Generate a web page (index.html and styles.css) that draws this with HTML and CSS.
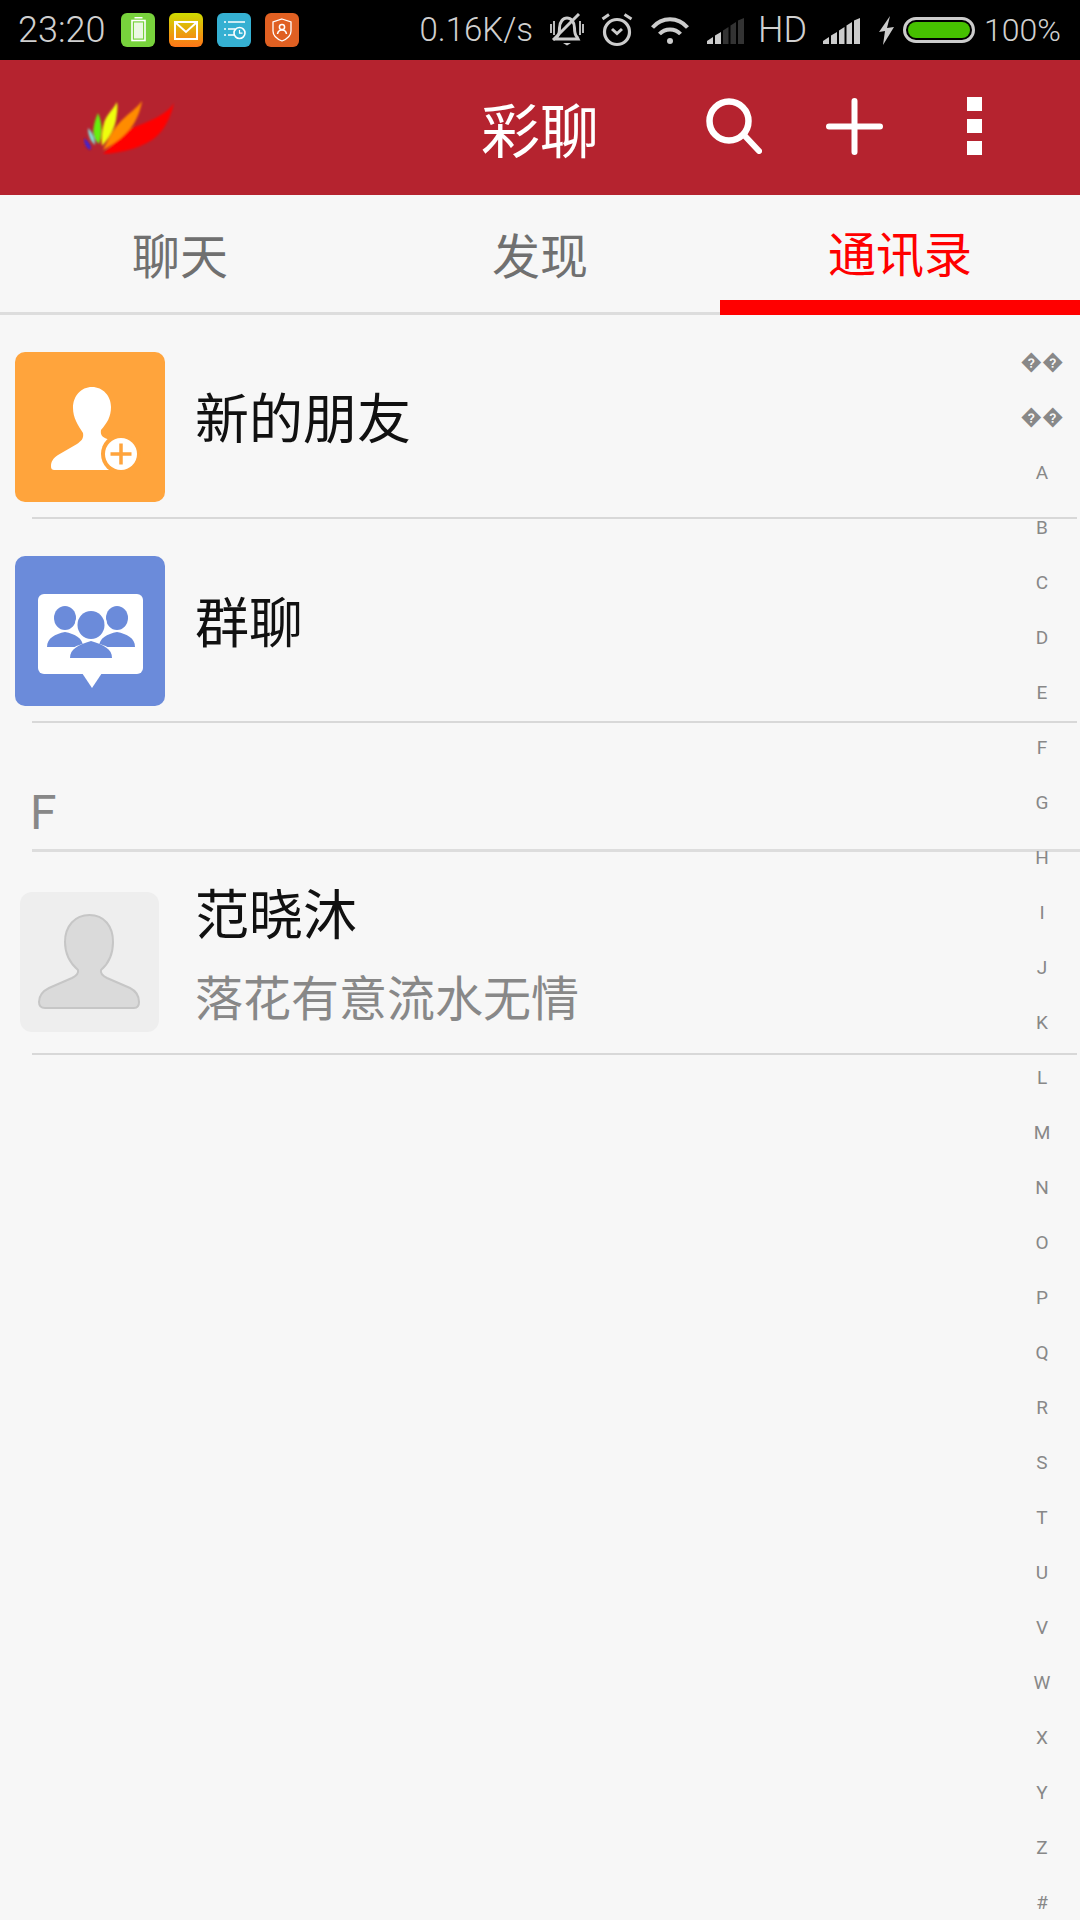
FILE: index.html
```html
<!DOCTYPE html>
<html lang="zh-CN">
  <head>
    <meta charset="UTF-8" />
    <meta name="viewport" content="width=device-width, initial-scale=1.0" />
    <title>彩聊</title>
    <link rel="stylesheet" href="styles.css">
  </head>

  <body>
    <div class="phone">
      <div class="statusbar">
        <div class="status-left">
          <span class="status-text time">23:20</span>
          <svg class="noti" viewBox="0 0 34 34"><rect width="34" height="34" rx="6" fill="#78d23c"/><rect x="11" y="7.5" width="13" height="20" fill="none" stroke="#fff" stroke-width="1.6"/><rect x="13.5" y="4" width="8" height="1.5" fill="#fff"/><rect x="13" y="9.5" width="9" height="16" fill="#fff" opacity=".85"/></svg>
          <svg class="noti" viewBox="0 0 34 34"><defs><linearGradient id="mailbg" x1="0" y1="0" x2="0" y2="1"><stop offset="0" stop-color="#cfdc00"/><stop offset="1" stop-color="#ff7518"/></linearGradient></defs><rect width="34" height="34" rx="6" fill="url(#mailbg)"/><rect x="6" y="9" width="22" height="17" fill="none" stroke="#fff" stroke-width="2"/><path d="M6.5 9.5 17 19 27.5 9.5" fill="none" stroke="#fff" stroke-width="2"/></svg>
          <svg class="noti" viewBox="0 0 34 34"><rect width="34" height="34" rx="6" fill="#35b0d2"/><path d="M7 9h2M11 9h17M7 16h2M11 16h7M7 22h2M11 22h6" stroke="#fff" stroke-width="1.5"/><circle cx="22.5" cy="20" r="5.5" fill="none" stroke="#fff" stroke-width="1.6"/><path d="M22.5 17v3.2h3" fill="none" stroke="#fff" stroke-width="1.2"/></svg>
          <svg class="noti" viewBox="0 0 34 34"><rect width="34" height="34" rx="6" fill="#e06022"/><path d="M17 6 26 9v9c0 5-4 8-9 10-5-2-9-5-9-10V9z" fill="none" stroke="#fff" stroke-width="1.3"/><circle cx="17" cy="14" r="2.6" fill="none" stroke="#fff" stroke-width="1.5"/><path d="M12.5 21c.5-3 2.5-4 4.500-4s4 1 4.500 4" fill="none" stroke="#fff" stroke-width="1.5"/></svg>
        </div>
        <div class="status-right">
          <span class="status-text speed">0.16K/s</span>
          <svg class="ic-bell" viewBox="0 0 34 34"><path d="M7 24c2-2 2.500-4 2.500-9 0-6 3.500-10 7.500-10s7.500 4 7.500 10c0 5 .5 7 2.500 9l1 2H6z" fill="none" stroke="#ccc" stroke-width="3"/><path d="M29 1 3 27" stroke="#ccc" stroke-width="3"/><path d="M13 30h8l-4 2.500z" fill="#ccc"/><path d="M1 11v9M4 8v14M30 8v14M33 11v9" stroke="#ccc" stroke-width="1.800"/></svg>
          <svg class="ic-alarm" viewBox="0 0 32 34"><circle cx="16" cy="19" r="12.500" fill="none" stroke="#ccc" stroke-width="3.200"/><path d="M11 16l5 4.500 5-4.500" fill="none" stroke="#ccc" stroke-width="3"/><path d="M1.500 6 8 1.500M23.500 1.500 30.500 6" stroke="#ccc" stroke-width="3"/></svg>
          <svg class="ic-wifi" viewBox="0 0 38 28"><path d="M1.500 11.500C11 .5 27 .5 36.500 11.500M8.500 18C14 12 24 12 29.500 18" fill="none" stroke="#ccc" stroke-width="4"/><circle cx="19" cy="25" r="3" fill="#ccc"/></svg>
          <svg class="ic-signal" viewBox="0 0 37 26"><path d="M0 26v-3l6-4v7z" fill="#ccc"/><path d="M8 26V17.500L14 14v12z" fill="#ccc"/><path d="M16 26V12.500L21.500 9v17z" fill="#333"/><path d="M23.500 26V7.500L29 4v22z" fill="#333"/><path d="M31 26V2.500L37 0v26z" fill="#333"/></svg>
          <span class="status-text hd">HD</span>
          <svg class="ic-signal ic-signal-full" viewBox="0 0 37 26"><path d="M0 26v-3l6-4v7z" fill="#ccc"/><path d="M8 26V17.500L14 14v12z" fill="#ccc"/><path d="M16 26V12.500L21.500 9v17z" fill="#ccc"/><path d="M23.500 26V7.500L29 4v22z" fill="#ccc"/><path d="M31 26V2.500L37 0v26z" fill="#ccc"/></svg>
          <svg class="ic-bolt" viewBox="0 0 16 31"><path d="M11 1 0 17l6-1-2 14L15 12l-7 1z" fill="#ccc"/></svg>
          <div class="battery"><div class="battery-fill"></div></div>
          <span class="status-text percent">100%</span>
        </div>
      </div>

      <div class="topbar">
        <div class="logo-cell">
          <svg class="logo" viewBox="0 0 92 55">
            <defs><filter id="soft"><feGaussianBlur stdDeviation="0.8"/></filter></defs>
            <g filter="url(#soft)">
              <path d="M20 54C40 53 62 47 74 36 82 29 88 16 91 3 85 13 70 20 54 26 44 30 36 36 30 44z" fill="#ff0000"/>
              <path d="M20 50C32 44 44 34 50 25 55 17 58 8 59 1 54 8 46 13 38 21 30 29 25 40 20 50z" fill="#ff8c00"/>
              <path d="M19 46C26 38 31 30 33 20 34 13 35 8 34 2 30 10 23 15 21 23 19 30 18 38 19 46z" fill="#eeff10"/>
              <path d="M16 44C19 36 20 24 15 13 12 20 9 30 11 36 12 40 14 42 16 44z" fill="#66ee10"/>
              <path d="M12 45C12 38 9 32 5 28 5 34 7 41 12 45z" fill="#80e0d8"/>
              <path d="M7 50C10 47 5 41 1 38 1 43 3 48 7 50z" fill="#4422cc"/>
            </g>
          </svg>
        </div>
        <div class="title">彩聊</div>
        <div class="actions">
          <svg class="ic-search" viewBox="0 0 56 56"><circle cx="23" cy="23" r="19.500" fill="none" stroke="#fff" stroke-width="6.500"/><path d="M38 37 53 53" stroke="#fff" stroke-width="6" stroke-linecap="round"/></svg>
          <svg class="ic-plus" viewBox="0 0 57 57"><path d="M3 28.500h51M28.500 3v51" stroke="#fff" stroke-width="6" stroke-linecap="round"/></svg>
          <div class="dots"><span></span><span></span><span></span></div>
        </div>
      </div>

      <div class="tabs">
        <div class="tab">聊天</div>
        <div class="tab">发现</div>
        <div class="tab active">通讯录</div>
      </div>

      <div class="contact-row">
        <svg class="icon" viewBox="0 0 150 150">
          <rect width="150" height="150" rx="10" fill="#ffa43c"/>
          <path d="M77 35C66 35 58 44 58 56 58 66 63 73 68 81 69 87 66 89 62 92L43 103C38 106 36 110 36 114 36 117 37 118 40 118H112V100L96 88C88 86 85 84 86 78 92 71 96 65 96 55 96 44 88 35 77 35z" fill="#fff"/>
          <circle cx="106" cy="102" r="20" fill="#ffa43c"/>
          <circle cx="106" cy="102" r="16" fill="#fff"/>
          <path d="M95.500 102h21M106 91.500v21" stroke="#ffa43c" stroke-width="3.500"/>
        </svg>
        <div class="row-text single">新的朋友</div>
      </div>
      <div class="divider"></div>

      <div class="contact-row">
        <svg class="icon" viewBox="0 0 150 150">
          <rect width="150" height="150" rx="10" fill="#6b8bda"/>
          <rect x="23" y="38" width="105" height="80" rx="6" fill="#fff"/>
          <path d="M67 117h20l-10 15z" fill="#fff"/>
          <g fill="#6b8bda">
            <ellipse cx="50" cy="62" rx="11" ry="12"/>
            <path d="M32 91c0-9 8-13 18-15 10 2 18 6 18 15z"/>
            <ellipse cx="102" cy="62" rx="11" ry="12"/>
            <path d="M84 91c0-9 8-13 18-15 10 2 18 6 18 15z"/>
          </g>
          <circle cx="76" cy="69" r="16" fill="#fff"/>
          <path d="M51 104c0-11 10-15 25-18 15 3 25 7 25 18z" fill="#fff"/>
          <ellipse cx="76" cy="69" rx="13.500" ry="14" fill="#6b8bda"/>
          <path d="M55 102c0-9 8-13 21-17 13 4 21 8 21 17z" fill="#6b8bda"/>
        </svg>
        <div class="row-text single">群聊</div>
      </div>
      <div class="divider"></div>

      <div class="section">F</div>
      <div class="section-line"></div>

      <div class="contact-row person">
        <svg class="avatar" viewBox="0 0 139 140">
          <rect width="139" height="140" rx="12" fill="#eeeeee"/>
          <path d="M69.500 23C55 23 45 34 45 50 45 62 51 72 58 78 59 82 56 84 52 86L29 96C23 99 19 104 19 110 19 114 21 116 25 116H114C118 116 119 114 119 110 119 104 116 99 110 96L87 86C83 84 80 82 81 78 88 72 93 62 93 50 93 34 84 23 69.500 23z" fill="#dadada" stroke="#c6c6c6" stroke-width="2"/>
        </svg>
        <div class="row-text">
          <div class="name">范晓沐</div>
          <div class="sign">落花有意流水无情</div>
        </div>
      </div>
      <div class="divider"></div>

      <div class="index">
        <span class="bad">��</span><span class="bad">��</span><span>A</span><span>B</span><span>C</span><span>D</span><span>E</span><span>F</span><span>G</span><span>H</span><span>I</span><span>J</span><span>K</span><span>L</span><span>M</span><span>N</span><span>O</span><span>P</span><span>Q</span><span>R</span><span>S</span><span>T</span><span>U</span><span>V</span><span>W</span><span>X</span><span>Y</span><span>Z</span><span>#</span>
      </div>
    </div>
  </body>
</html>
```

FILE: styles.css
```css
* {
  box-sizing: border-box;
}

body {
  margin: 0;
  background-color: #f7f7f7;
  font-family: "Noto Sans CJK SC", "Noto Sans", sans-serif;
}

.phone {
  position: relative;
  width: 1080px;
  height: 1920px;
  overflow: hidden;
}

/* status bar */
.statusbar {
  display: flex;
  justify-content: space-between;
  align-items: center;
  height: 60px;
  background-color: black;
  padding: 0 19px 0 18px;
}

.status-left,
.status-right {
  display: flex;
  align-items: center;
}

.status-text {
  font-family: Roboto, sans-serif;
  font-weight: 300;
  font-size: 33px;
  line-height: 60px;
  color: #d0d0d0;
}

.noti {
  width: 34px;
  height: 34px;
  margin-left: 14px;
}

.time {
  margin-right: 2px;
  font-size: 36px;
}

.ic-bell {
  width: 34px;
  height: 34px;
  margin-left: 17px;
}

.ic-alarm {
  width: 32px;
  height: 34px;
  margin-left: 17px;
}

.ic-wifi {
  width: 38px;
  height: 28px;
  margin-left: 18px;
}

.ic-signal {
  width: 37px;
  height: 26px;
  margin-left: 18px;
  margin-top: 2px;
}

.hd {
  margin-left: 14px;
  font-size: 36px;
}

.ic-signal-full {
  margin-left: 16px;
}

.ic-bolt {
  width: 16px;
  height: 31px;
  margin-left: 19px;
}

.battery {
  width: 72px;
  height: 26px;
  margin-left: 8px;
  padding: 2px;
  border: 3px solid #cccccc;
  border-radius: 13px;
  background-color: black;
}

.battery-fill {
  height: 100%;
  border-radius: 9px;
  background-color: #46c000;
}

.percent {
  margin-left: 9px;
  font-size: 32px;
}

/* red title bar */
.topbar {
  display: grid;
  grid-template-columns: 1fr auto 1fr;
  align-items: center;
  height: 135px;
  background-color: #b5232f;
}

.logo-cell {
  padding-left: 83px;
}

.logo {
  display: block;
  width: 92px;
  height: 55px;
}

.title {
  font-size: 59px;
  line-height: 135px;
  color: white;
}

.actions {
  display: flex;
  align-items: center;
  padding-left: 107px;
  padding-bottom: 3px;
}

.ic-search {
  width: 56px;
  height: 56px;
}

.ic-plus {
  width: 57px;
  height: 57px;
  margin-left: 64px;
}

.dots {
  display: flex;
  flex-direction: column;
  gap: 8px;
  margin-left: 84px;
}

.dots span {
  width: 15px;
  height: 14px;
  background-color: white;
}

/* tabs */
.tabs {
  display: flex;
  height: 120px;
}

.tab {
  flex: 1;
  padding-top: 22px;
  border-bottom: 3px solid #dddddd;
  text-align: center;
  font-size: 48px;
  line-height: 72px;
  color: #707070;
}

.tab.active {
  padding-top: 20px;
  border-bottom: 15px solid red;
  color: red;
}

/* list */
.contact-row {
  display: flex;
  height: 202px;
  padding: 37px 0 0 15px;
}

.icon {
  flex: none;
  width: 150px;
  height: 150px;
}

.row-text {
  margin-left: 30px;
}

.single {
  padding-top: 26px;
  font-size: 54px;
  line-height: 76px;
  color: #111111;
}

.divider {
  height: 2px;
  margin: 0 3px 0 32px;
  background-color: #d8d8d8;
}

.section {
  height: 126px;
  padding: 60px 0 0 30px;
  font-family: Roboto, sans-serif;
  font-size: 48px;
  line-height: 60px;
  color: #888888;
}

.section-line {
  height: 3px;
  margin-left: 32px;
  background-color: #dddddd;
}

.person {
  height: 201px;
  padding: 40px 0 0 20px;
}

.avatar {
  flex: none;
  width: 139px;
  height: 140px;
}

.person .row-text {
  margin-left: 36px;
  margin-top: -18px;
}

.name {
  font-size: 54px;
  line-height: 76px;
  color: #111111;
}

.sign {
  margin-top: 10px;
  font-size: 48px;
  line-height: 70px;
  color: #888888;
}

/* letter index, lies over the list */
.index {
  position: absolute;
  top: 335px;
  right: 0;
  display: flex;
  flex-direction: column;
  width: 76px;
}

.index span {
  height: 55px;
  text-align: center;
  font-family: Roboto, "DejaVu Sans", sans-serif;
  font-size: 19px;
  line-height: 55px;
  color: #888888;
}

.index .bad {
  font-size: 21px;
}
```
